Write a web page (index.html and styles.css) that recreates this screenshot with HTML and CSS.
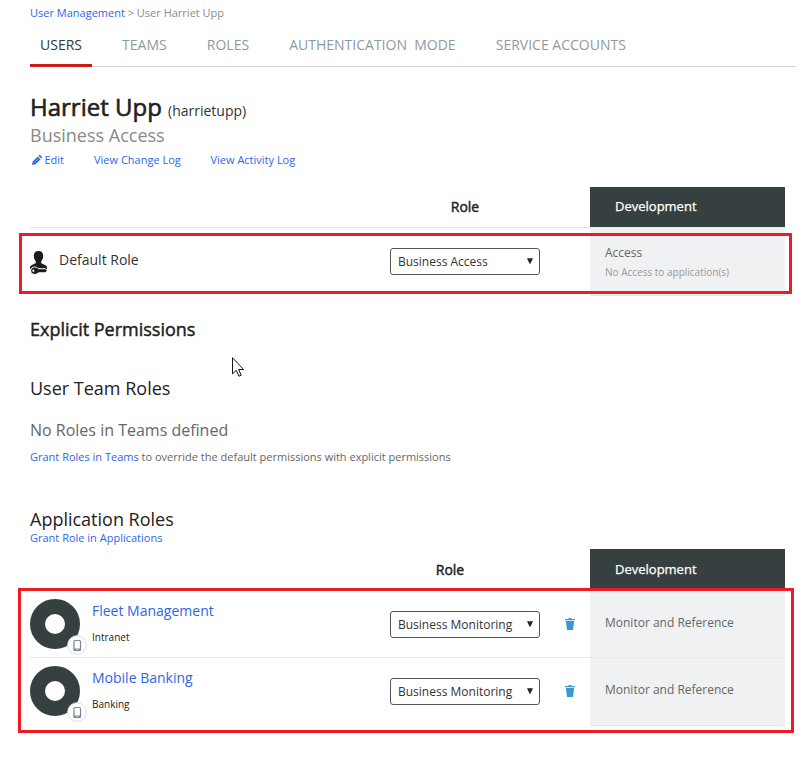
FILE: index.html
```html
<!DOCTYPE html>
<html lang="en">
<head>
<meta charset="utf-8">
<title>User Management</title>
<link rel="stylesheet" href="styles.css">
</head>
<body>
<svg class="defs" width="0" height="0" aria-hidden="true">
  <symbol id="phone" viewBox="0 0 20 20">
    <circle cx="10" cy="10" r="9.3" fill="#fff" stroke="#dcdcdc" stroke-width="1"/>
    <rect x="7" y="5.500" width="6.500" height="10" rx="1" fill="#fff" stroke="#778797" stroke-width="1.200"/>
    <path d="M7 13.500h6.500v2H7z" fill="#778797"/>
    <path d="M9.400 14.500h1.600" stroke="#fff" stroke-width=".8"/>
  </symbol>
  <symbol id="trash" viewBox="0 0 10 12">
    <path d="M0 1h3.500V0h3v1H10v1.200H0zM.8 3h8.400L8 12H2z" fill="#3d98cf"/>
  </symbol>
  <symbol id="arrow" viewBox="0 0 6 6">
    <path d="M0 .2h6L3.400 5.800h-.8z" fill="#222"/>
  </symbol>
</svg>
<main class="page">
  <nav class="crumbs"><a href="#">User Management</a> &gt; User Harriet Upp</nav>
  <nav class="tabs">
    <a class="tab active" href="#">USERS</a>
    <a class="tab" href="#">TEAMS</a>
    <a class="tab" href="#">ROLES</a>
    <a class="tab" href="#">AUTHENTICATION&nbsp; MODE</a>
    <a class="tab" href="#">SERVICE ACCOUNTS</a>
  </nav>

  <header class="profile">
    <h1><span class="name">Harriet Upp</span><span class="login">(harrietupp)</span></h1>
    <p class="access">Business Access</p>
    <div class="actions">
      <a class="edit" href="#"><svg class="pencil" viewBox="0 0 10 10"><path d="M0 10l.7-3.500L5.800 1.400 8.600 4.200 3.500 9.300zM6.400.8L7.100.1q.5-.3 1 0L9.900 1.900q.3.500 0 1l-.7.700z" fill="#2f66e6"/><path d="M2.400 7.600L6.600 3.400" stroke="#fff" stroke-width=".4"/></svg><span class="edit-text">Edit</span></a>
      <a class="change" href="#">View Change Log</a>
      <a class="activity" href="#">View Activity Log</a>
    </div>
  </header>

  <section class="grid default-grid">
    <div class="head">
      <div class="role-head wide">Role</div>
      <div class="dev-head">Development</div>
    </div>
    <div class="row">
      <div class="who">
        <svg class="user-icon" viewBox="0 0 18 24"><path d="M8.500 0c3 0 4.700 1.600 4.700 4.700 0 2.500-.8 4.400-2 5.700v1.700c1 1.300 5.800 1.700 5.800 4.500V18H0v-1.400c0-2.800 4.800-3.200 5.800-4.500v-1.700C4.600 9.100 3.800 7.200 3.800 4.700 3.800 1.600 5.500 0 8.500 0z" fill="#1c1c1c"/><path d="M4.700 16c1.600 0 2.800.6 3.500 1.700h7.200l1.800 1.800-1.600 2.300H8.400c-.7 1-1.900 1.600-3.700 1.600-2.400 0-4-1.400-4-3.700S2.300 16 4.700 16z" fill="#1c1c1c" stroke="#fff" stroke-width="1"/><ellipse cx="3.400" cy="19.700" rx="1" ry="1.200" fill="#fff"/></svg>
        <span class="who-name">Default Role</span>
      </div>
      <div class="pick"><select><option>Business Access</option></select><svg class="arrow"><use href="#arrow"/></svg></div>
      <div class="bin"></div>
      <div class="dev"><p class="dev-title">Access</p><p class="dev-note">No Access to application(s)</p></div>
    </div>
    <div class="mark mark-default"></div>
  </section>

  <h2 class="explicit">Explicit Permissions</h2>
  <h3 class="team-title">User Team Roles</h3>
  <p class="empty">No Roles in Teams defined</p>
  <p class="hint"><a href="#">Grant Roles in Teams</a> to override the default permissions with explicit permissions</p>
  <h3 class="app-title">Application Roles</h3>
  <p class="grant"><a href="#">Grant Role in Applications</a></p>

  <section class="grid app-grid">
    <div class="head">
      <div class="role-head">Role</div>
      <div class="dev-head">Development</div>
    </div>
    <div class="row">
      <div class="app">
        <div class="logo"><svg class="badge"><use href="#phone"/></svg></div>
        <div class="app-text"><a class="app-name" href="#">Fleet Management</a><span class="app-kind">Intranet</span></div>
      </div>
      <div class="pick"><select><option>Business Monitoring</option></select><svg class="arrow"><use href="#arrow"/></svg></div>
      <div class="bin"><svg class="trash"><use href="#trash"/></svg></div>
      <div class="dev"><p class="dev-title">Monitor and Reference</p></div>
    </div>
    <div class="row">
      <div class="app">
        <div class="logo"><svg class="badge"><use href="#phone"/></svg></div>
        <div class="app-text"><a class="app-name" href="#">Mobile Banking</a><span class="app-kind">Banking</span></div>
      </div>
      <div class="pick"><select><option>Business Monitoring</option></select><svg class="arrow"><use href="#arrow"/></svg></div>
      <div class="bin"><svg class="trash"><use href="#trash"/></svg></div>
      <div class="dev"><p class="dev-title">Monitor and Reference</p></div>
    </div>
    <div class="mark mark-apps"></div>
  </section>
  <svg class="cursor" viewBox="0 0 12 20"><path d="M.5.7v16.200l3.700-3.600 2.700 5.900 2.300-1-2.600-5.700h5z" fill="#fff" stroke="#111527" stroke-width="1"/></svg>
</main>
</body>
</html>
```

FILE: styles.css
```css
* { box-sizing: border-box; }
body { margin: 0; background: #fff; color: #222; font-family: "Open Sans", sans-serif; font-size: 11px; }
h1, h2, h3, p { margin: 0; font-weight: 400; }
a { color: #2f66e6; text-decoration: none; }
.defs { position: absolute; }
.page { position: relative; height: 759px; padding: 5px 16px 0 30px; overflow: hidden; }

.crumbs { height: 16px; line-height: 16px; color: #8c8c8c; }
.tabs { display: flex; gap: 20.100px; height: 46px; border-bottom: 1px solid #cbd6d5; }
.tab { height: 46px; padding: 0 10px; font-size: 14px; line-height: 47px; color: #8e9b9b; white-space: nowrap; }
.tab.active { color: #333c3e; border-bottom: 3px solid #c81e15; }

.profile { padding-top: 24px; }
.profile h1 { display: flex; align-items: baseline; height: 32px; line-height: 32px; }
.name { width: 138px; font-size: 24px; -webkit-text-stroke: .6px #222; white-space: nowrap; }
.login { font-size: 14px; color: #333; }
.access { height: 24px; font-size: 18px; line-height: 24px; color: #8a8a8a; }
.actions { display: flex; height: 40px; padding-top: 5px; line-height: 16px; }
.edit { display: flex; align-items: center; width: 64px; padding-left: 2px; }
.actions a { height: 16px; }
.pencil { width: 10px; height: 10px; margin-right: 2.500px; }
.change { width: 116.500px; }

.grid { position: relative; width: 755px; }
.head { display: flex; justify-content: space-between; }
.role-head { width: 120px; margin-left: 360px; text-align: center; font-size: 14px; line-height: 40px; -webkit-text-stroke: .45px #222; }
.role-head.wide { width: 150px; }
.dev-head { width: 195px; padding-left: 25px; background: #374040; color: #fff; font-size: 13px; line-height: 39px; -webkit-text-stroke: .25px #fff; }
.default-grid .head { height: 41px; border-bottom: 1px solid #e6e7e8; }
.default-grid .dev-head { height: 40px; }
.row { display: grid; grid-template-columns: 360px 150px 50px 195px; }
.default-grid .row { height: 68px; }
.who { display: flex; padding-top: 22px; }
.user-icon { width: 18px; height: 24px; margin: 1px 11px 0 0; }
.who-name { font-size: 14px; line-height: 20px; color: #333; }
.pick { position: relative; padding-top: 20px; }
select { display: block; width: 150px; height: 27px; padding: 0 7px; border: 1px solid #555; border-radius: 3px; background: #fff; color: #333; appearance: none; font: 12px "Open Sans", sans-serif; }
.arrow { position: absolute; top: 30px; right: 7px; width: 6px; height: 6px; }
.dev { background: #f0f1f3; padding-left: 15px; color: #666; border-bottom: 1px solid #e6e7e8; }
.dev-title { font-size: 12px; line-height: 20px; padding-top: 15px; }
.dev-note { font-size: 10px; line-height: 18px; color: #999; }
.mark { position: absolute; border: 3px solid #ed1c24; pointer-events: none; }
.mark-default { left: -11px; top: 46px; width: 773px; height: 61px; }
.mark-apps { left: -12px; top: 39px; width: 776px; height: 145px; }

.explicit { margin-top: 21px; font-size: 18px; line-height: 25px; -webkit-text-stroke: .45px #222; }
.team-title { margin-top: 34px; font-size: 18px; line-height: 25px; }
.empty { margin-top: 18px; font-size: 16px; line-height: 22px; color: #666; }
.hint { margin-top: 8px; line-height: 16px; color: #666; }
.app-title { margin-top: 42px; font-size: 18px; line-height: 25px; }
.grant { margin-top: -2px; line-height: 16px; }

.app-grid { margin-top: 3px; }
.app-grid .head { height: 40px; }
.app-grid .role-head { line-height: 41px; }
.app-grid .dev-head { line-height: 40px; }
.app-grid .row { height: 69px; border-bottom: 1px solid #e6e7e8; }
.app-grid .row + .row { height: 68px; border: 0; }
.app-grid .dev { border: 0; }
.app-grid .row + .row .dev { border-bottom: 1px solid #e6e7e8; }
.app { display: flex; padding-top: 10px; }
.row + .row .app { padding-top: 8px; }
.logo { position: relative; width: 50px; height: 50px; margin-right: 12px; border: 15.500px solid #374040; border-radius: 50%; }
.badge { position: absolute; left: 22px; top: 21px; width: 20px; height: 20px; }
.app-text { display: flex; flex-direction: column; }
.app-name { font-size: 14px; line-height: 24px; }
.app-kind { font-size: 10px; line-height: 16px; margin-top: 6px; color: #222; }
.app-grid .pick { padding-top: 22px; }
.app-grid .arrow { top: 32px; }
.app-grid .row + .row .pick { padding-top: 20px; }
.app-grid .row + .row .arrow { top: 30px; }
.bin { padding: 29px 0 0 25px; }
.row + .row .bin { padding-top: 27px; }
.trash { display: block; width: 10px; height: 12px; }
.app-grid .dev-title { padding-top: 24px; }
.app-grid .row + .row .dev-title { padding-top: 22px; }
.cursor { position: absolute; left: 232px; top: 357px; width: 12px; height: 20px; }
```
